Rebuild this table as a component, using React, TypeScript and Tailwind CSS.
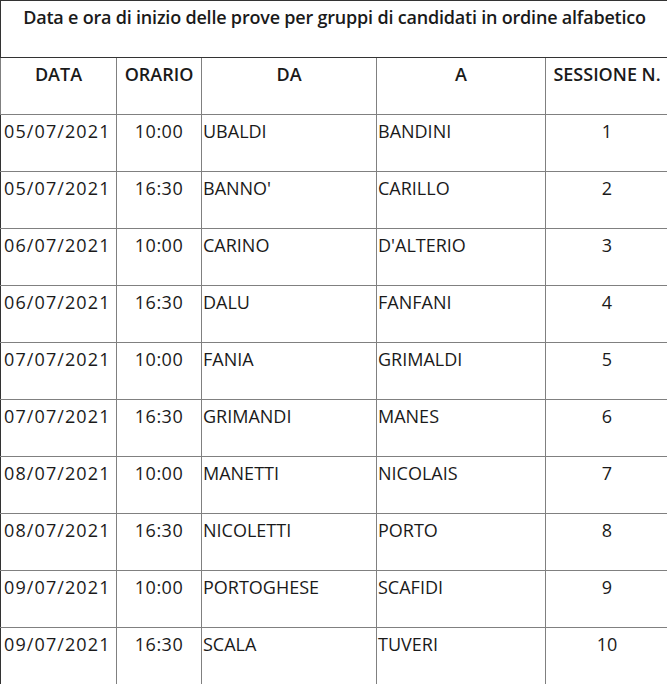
import React from "react";

const rows = [
  ["05/07/2021", "10:00", "UBALDI", "BANDINI", "1"],
  ["05/07/2021", "16:30", "BANNO'", "CARILLO", "2"],
  ["06/07/2021", "10:00", "CARINO", "D'ALTERIO", "3"],
  ["06/07/2021", "16:30", "DALU", "FANFANI", "4"],
  ["07/07/2021", "10:00", "FANIA", "GRIMALDI", "5"],
  ["07/07/2021", "16:30", "GRIMANDI", "MANES", "6"],
  ["08/07/2021", "10:00", "MANETTI", "NICOLAIS", "7"],
  ["08/07/2021", "16:30", "NICOLETTI", "PORTO", "8"],
  ["09/07/2021", "10:00", "PORTOGHESE", "SCAFIDI", "9"],
  ["09/07/2021", "16:30", "SCALA", "TUVERI", "10"],
];

const widths = ["w-[116px]", "w-[85px]", "w-[175px]", "w-[169px]", "w-[123px]"];

export default function App() {
  return (
    <div className="w-[667px] h-[684px] overflow-hidden bg-white" style={{ fontFamily: "'Open Sans', Roboto, sans-serif" }}>
      <table className="w-[668px] border-collapse table-fixed text-[18px] leading-[27px] text-[#1a1a1a] border border-[#333]">
        <colgroup>
          {widths.map((w, i) => (
            <col key={i} className={w} />
          ))}
        </colgroup>
        <tbody>
          <tr className="h-[57px]">
            <td colSpan={5} className="border border-[#333] align-top text-center pt-[3px] font-semibold tracking-[-0.2px]">
              Data e ora di inizio delle prove per gruppi di candidati in ordine alfabetico
            </td>
          </tr>
          <tr className="h-[57px]">
            {["DATA", "ORARIO", "DA", "A", "SESSIONE N."].map((h, i) => (
              <td key={i} className="border border-[#808080] align-top text-center pt-[3px] font-semibold">
                {h}
              </td>
            ))}
          </tr>
          {rows.map((r, ri) => (
            <tr key={ri} className="h-[57px]">
              <td className="border border-[#808080] border-l-[#333] align-top text-left pl-[3px] pt-[3px] tracking-[1.1px]">{r[0]}</td>
              <td className="border border-[#808080] align-top text-center pt-[3px] tracking-[0.5px]">{r[1]}</td>
              <td className="border border-[#808080] align-top text-left pl-[1px] pt-[3px]">{r[2]}</td>
              <td className="border border-[#808080] align-top text-left pl-[1px] pt-[3px]">{r[3]}</td>
              <td className="border border-[#808080] align-top text-center pt-[3px]">{r[4]}</td>
            </tr>
          ))}
        </tbody>
      </table>
    </div>
  );
}
